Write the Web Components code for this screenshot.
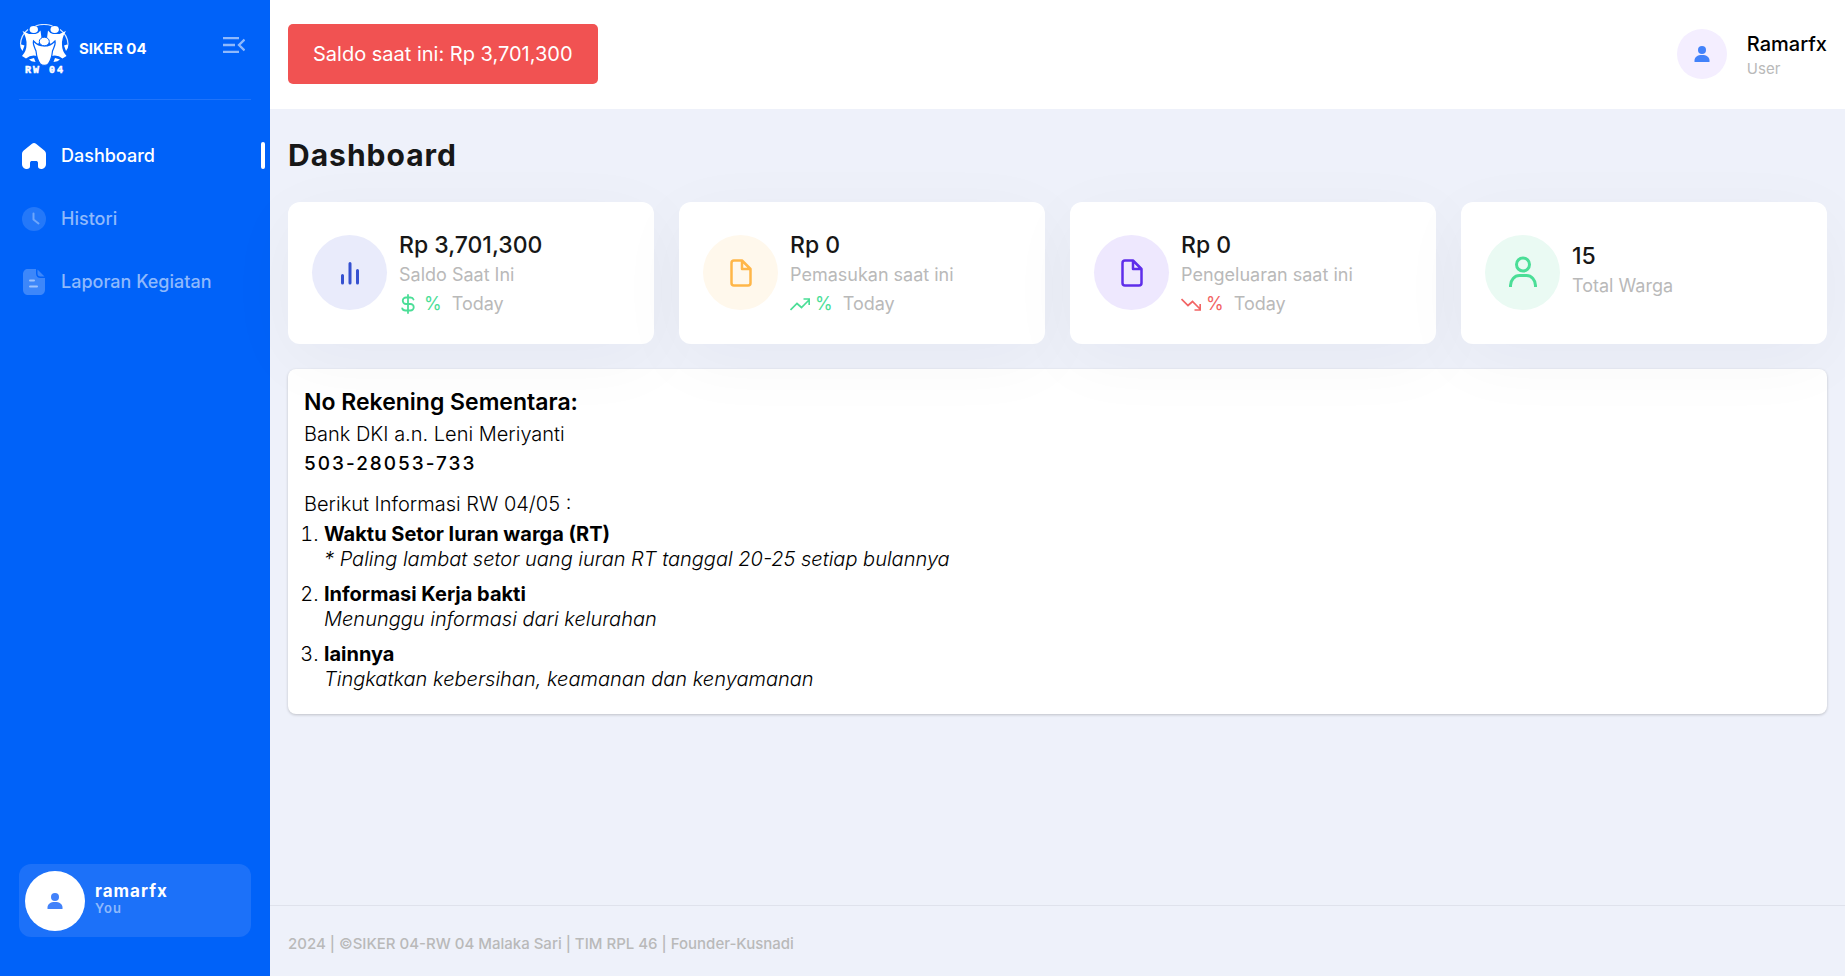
<!DOCTYPE html>
<html lang="id">
<head>
<meta charset="utf-8">
<title>SIKER 04 - Dashboard</title>
<style>
body { margin: 0; font-family: Inter, "Open Sans", sans-serif; background: #eef1fa; color: #111; }
</style>
</head>
<body>
<app-shell>
  <side-bar slot="side" user="ramarfx">
    <nav-item active label="Dashboard" icon="home"></nav-item>
    <nav-item label="Histori" icon="clock"></nav-item>
    <nav-item label="Laporan Kegiatan" icon="doc"></nav-item>
  </side-bar>
  <top-bar slot="top" name="Ramarfx" role-name="User">Saldo saat ini: Rp 3,701,300</top-bar>
  <card-grid>
    <stat-card icon="bars" trend="dollar" value="Rp 3,701,300" style="--tint:#e9ebfb;--ink:#3551d0;--trend:#4bde97">Saldo Saat Ini</stat-card>
    <stat-card icon="file" trend="up" value="Rp 0" style="--tint:#fff8ec;--ink:#ffb648;--trend:#4bde97">Pemasukan saat ini</stat-card>
    <stat-card icon="file" trend="down" value="Rp 0" style="--tint:#eee8fe;--ink:#5f2eea;--trend:#f26464">Pengeluaran saat ini</stat-card>
    <stat-card icon="person" value="15" style="--tint:#eafaf3;--ink:#4bde97">Total Warga</stat-card>
  </card-grid>
  <info-panel></info-panel>
  <page-footer slot="foot">2024 | ©SIKER 04-RW 04 Malaka Sari | TIM RPL 46 | Founder-Kusnadi</page-footer>
</app-shell>
<script>
const define = (name, render) => customElements.define(name, class extends HTMLElement {
  connectedCallback() {
    if (this.shadowRoot) return;
    this.attachShadow({ mode: 'open' }).innerHTML = render(this);
  }
});

const icons = {
  home: '<svg width="24" height="26" viewBox="0 0 24 26"><path fill="#fff" d="M10 .8c1.200-1 2.800-1 4 0l8.300 6.700c1 .8 1.700 2 1.700 3.400V21c0 2.800-2 5-4.800 5-2 0-3.200-1-3.200-2.800V20c0-1.400-1-2-2-2h-4c-1 0-2 .6-2 2v3.200C8 25 6.800 26 4.800 26 2 26 0 23.800 0 21V10.900c0-1.400.7-2.600 1.700-3.400z"/></svg>',
  clock: '<svg width="24" height="24" viewBox="0 0 24 24"><circle cx="12" cy="12" r="12" fill="#fff" fill-opacity=".14"/><path d="M11.500 6.500v6l5 4" fill="none" stroke="#fff" stroke-opacity=".34" stroke-width="2" stroke-linecap="round" stroke-linejoin="round"/></svg>',
  doc: '<svg width="24" height="26" viewBox="0 0 24 26"><path fill="#fff" fill-opacity=".24" d="M6 0h8v4.500C14 7.500 16 9 18.500 9H23v11.500c0 3.500-2 5.500-5.500 5.500H6.500C3 26 1 24 1 20.500v-15C1 2 3 0 6 0z"/><path fill="#fff" fill-opacity=".24" d="M15.500.5 22.500 7.500h-4c-2 0-3-1-3-3z"/><path d="M8 11.500h4M8 17.500h7" stroke="#fff" stroke-opacity=".5" stroke-width="2" stroke-linecap="round"/></svg>',
  bars: '<svg width="75" height="75" viewBox="0 0 75 75"><path d="M30.500 40.500v7.500M38 28.500V48M45.500 35.500V48" stroke="currentColor" stroke-width="3" stroke-linecap="round"/></svg>',
  file: '<svg width="75" height="75" viewBox="0 0 75 75"><path d="M39 25.500H31a2.500 2.500 0 0 0-2.500 2.500v20a2.500 2.500 0 0 0 2.500 2.500h14a2.500 2.500 0 0 0 2.500-2.500V34zV34h8.500" fill="none" stroke="currentColor" stroke-width="2.500" stroke-linejoin="round"/></svg>',
  person: '<svg width="75" height="75" viewBox="0 0 75 75"><circle cx="38" cy="29.500" r="6.500" fill="none" stroke="currentColor" stroke-width="3"/><path d="M25.500 52v-1.500c0-5.500 4-10 9-10h7c5 0 9 4.500 9 10V52" fill="none" stroke="currentColor" stroke-width="3"/></svg>',
  dollar: '<svg width="20" height="20" viewBox="0 0 20 20"><path d="M9 1v18M14.500 5.500c-.5-1.500-1.500-2-3-2H7a3 3 0 0 0 0 6.500h4.500a3 3 0 0 1 0 6.500H6.500c-1.800 0-3-.8-3.300-2.200" fill="none" stroke="currentColor" stroke-width="1.800" stroke-linecap="round"/></svg>',
  up: '<svg width="20" height="20" viewBox="0 0 20 20"><path d="M.5 16 7 9.500l4.500 4L19 6M13.500 5H19.200v6" fill="none" stroke="currentColor" stroke-width="1.700"/></svg>',
  down: '<svg width="20" height="20" viewBox="0 0 20 20"><path d="M.5 5 7 11.500l4.500-4L19 15M13.500 16H19.200v-6" fill="none" stroke="currentColor" stroke-width="1.700"/></svg>',
  user: '<svg width="16" height="16" viewBox="0 0 16 16"><circle cx="8" cy="4" r="4" fill="#4282fa"/><path fill="#4282fa" d="M.5 16v-1.500c0-3.500 3-5.500 7.500-5.500s7.500 2 7.500 5.500V16z"/></svg>',
  logo: `<svg class="logo" width="50" height="54" viewBox="0 0 50 54" role="img" aria-label="RW 04">
    <path d="M16.500 2q8.500-3 17 0M9 5.500Q2 11 1.500 20M41 5.500q7.500 5.500 8 14.500" fill="none" stroke="#fff" stroke-opacity=".85" stroke-width="1.200"/>
    <path fill="#fff" d="M1 20l4.500 1.500L3.500 27Q1 24 1 20zM49.500 20 45 21.500l2 5.500q2.500-3 2.500-7zM10 35.500l5-1.500 1.500 4Q12 37.500 10 35.500zM41 35.500 36 34l-1.500 4q4.500-.5 6.500-2.500z"/>
    <ellipse cx="14.800" cy="5.500" rx="4.200" ry="3.400" fill="#fff"/><ellipse cx="35.700" cy="5.500" rx="4.200" ry="3.400" fill="#fff"/>
    <path fill="#fff" d="M3.500 7 10 10h6.500Q19.500 9.500 21.500 6.500l1 7.500-4 7v11Q12 30 7 34.500l-4-2.500Q7.500 27 7.500 21 8 14 3.500 7zM47 7 40.500 10H34Q31 9.500 29 6.500L28 14l4 7v11q6.500-2 11.500 2.500l4-2.500Q43 27 43 21q-.5-7 4-14z"/>
    <path fill="#fff" stroke="#0062f9" stroke-width="1.200" d="M14.500 17Q19 22 25.300 22T36 17c1 4-1.500 7-2.500 10-.5 5-1.500 9-4 12.500-2 2.500-6.500 2.500-8.500 0-2.500-3.500-3.500-7.500-4-12.500-1-3-3.500-6-2.500-10z"/>
    <ellipse cx="25.300" cy="17.500" rx="5" ry="4.300" fill="#fff" stroke="#0062f9" stroke-width="1"/>
    <text x="6" y="49" fill="#fff" stroke="#fff" stroke-width=".5" font-family="Liberation Mono, monospace" font-weight="700" font-size="10" letter-spacing="2">RW 04</text></svg>`
};

define('app-shell', () => `<style>
  :host { display: grid; grid-template-columns: 270px minmax(0, 1fr); min-height: 100vh; }
  .col { display: flex; flex-direction: column; }
  main { flex: 1; padding: 24px 18px 0; }
  h1 { margin: 0 0 24px; font-size: 30px; line-height: 45px; font-weight: 700; letter-spacing: 1px; color: #171717; }
</style><slot name="side"></slot><div class="col"><slot name="top"></slot><main><h1>Dashboard</h1><slot></slot></main><slot name="foot"></slot></div>`);

define('side-bar', el => `<style>
  :host { display: flex; flex-direction: column; background: #0062f9; color: #fff; }
  .brand { display: flex; align-items: center; height: 50px; margin: 0 19px; padding: 24px 0 25px; border-bottom: 1px solid #1f73fa; }
  .brand a { display: flex; align-items: center; gap: 10px; color: #fff; text-decoration: none; font-size: 15px; font-weight: 700; }
  svg { display: block; }
  .logo { margin-bottom: -4px; }
  .brand span { padding-bottom: 2px; }
  button { border: 0; background: none; padding: 0; margin: 0 6px 8px auto; }
  nav { display: flex; flex-direction: column; margin-top: 24px; }
  .me { display: flex; align-items: center; gap: 10px; margin: auto 19px 39px; padding: 7px 6px 6px; border-radius: 12px; background: #1c71f9; }
  .pic { width: 60px; height: 60px; border-radius: 50%; background: #fff; display: grid; place-items: center; }
  .id { padding-bottom: 5px; }
  b { display: block; font-size: 17px; line-height: 20px; font-weight: 700; letter-spacing: 1px; }
  small { display: block; font-size: 13px; line-height: 15px; font-weight: 600; letter-spacing: 1px; color: #8fb9fc; }
</style><div class="brand"><a href="#">${icons.logo}<span>SIKER 04</span></a>
<button aria-label="Menu"><svg width="22" height="16" viewBox="0 0 22 16"><path d="M0 1.200h16M0 8h12M0 14.800h16" stroke="#8fb9fc" stroke-width="2.300"/><path d="M21.500 2.500 16 8l5.500 5.500" fill="none" stroke="#8fb9fc" stroke-width="2.300"/></svg></button></div>
<nav><slot></slot></nav>
<div class="me"><span class="pic">${icons.user}</span><span class="id"><b>${el.getAttribute('user')}</b><small>You</small></span></div>`);

define('nav-item', el => `<style>
  :host { display: block; }
  a { display: flex; align-items: center; gap: 15px; height: 63px; padding: 0 5px 0 22px; color: #8fb9fc; text-decoration: none; font-size: 18px; font-weight: 500; }
  :host([active]) a { color: #fff; }
  i { margin-left: auto; width: 4px; height: 27px; border-radius: 2px; background: #fff; }
</style><a href="#">${icons[el.getAttribute('icon')]}<span>${el.getAttribute('label')}</span>${el.hasAttribute('active') ? '<i></i>' : ''}</a>`);

define('top-bar', el => `<style>
  :host { display: flex; align-items: flex-start; justify-content: space-between; padding: 24px 18px 25px; background: #fff; }
  button { height: 60px; padding: 0 25px; border: 0; border-radius: 5px; background: #f15252; color: #fff; font: 400 20px/30px Inter, sans-serif; }
  .who { display: flex; align-items: center; gap: 20px; height: 60px; }
  .pic { width: 50px; height: 50px; border-radius: 50%; background: #f4eeff; display: grid; place-items: center; }
  .id { padding-top: 1px; }
  b { display: block; font-size: 20px; line-height: 28px; font-weight: 500; color: #000; }
  small { display: block; font-size: 15px; line-height: 22px; color: #b9b9b9; }
</style><button><slot></slot></button><div class="who"><span class="pic">${icons.user}</span><span class="id"><b>${el.getAttribute('name')}</b><small>${el.getAttribute('role-name')}</small></span></div>`);

define('card-grid', () => `<style>
  :host { display: grid; grid-template-columns: repeat(4, minmax(0, 1fr)); gap: 25px; margin-bottom: 25px; }
</style><slot></slot>`);

define('stat-card', el => {
  const t = el.getAttribute('trend');
  return `<style>
  :host { position: relative; display: flex; align-items: center; gap: 12px; height: 142px; box-sizing: border-box; padding: 0 24px 2px; border-radius: 12px; background: #fff; box-shadow: 0 16px 72px rgba(17, 17, 40, .04); }
  .ic { flex: none; width: 75px; height: 75px; border-radius: 50%; background: var(--tint); color: var(--ink); }
  svg { display: block; }
  div.x { padding-bottom: 3px; }
  :host([trend]) div.x { padding: 5px 0 0; }
  b { display: block; font-size: 23px; line-height: 29px; font-weight: 500; color: #171717; }
  .l { display: block; font-size: 18px; line-height: 29px; color: #b9b9b9; }
  .t { display: flex; align-items: center; font-size: 18px; line-height: 29px; color: var(--trend); }
  .t span { margin-left: 5px; }
  .t em { margin-left: 10px; font-style: normal; color: #b9b9b9; }
</style><span class="ic">${icons[el.getAttribute('icon')]}</span><div class="x"><b>${el.getAttribute('value')}</b><span class="l"><slot></slot></span>${t ? `<div class="t">${icons[t]}<span>%</span><em>Today</em></div>` : ''}</div>`;
});

define('info-panel', () => `<style>
  :host { display: block; padding: 17px 16px 22px; border-radius: 8px; background: #fff; box-shadow: 0 1px 3px rgba(0, 0, 0, .2); color: #000; font-size: 20px; font-weight: 300; }
  h2 { margin: 0; font-size: 23px; line-height: 33px; font-weight: 600; }
  p { margin: 0; line-height: 30px; }
  .n { font-size: 19px; font-weight: 500; letter-spacing: 2px; margin-bottom: 10px; }
  ol { margin: 3px 0 0; padding-left: 20px; line-height: 25px; }
  li { margin-bottom: 10px; }
  li:last-child { margin-bottom: 0; }
  strong { font-weight: 700; }
</style><h2>No Rekening Sementara:</h2><p>Bank DKI a.n. Leni Meriyanti</p><p class="n">503-28053-733</p><p>Berikut Informasi RW 04/05 :</p>
<ol><li><strong>Waktu Setor Iuran warga (RT)</strong><br><em>* Paling lambat setor uang iuran RT tanggal 20-25 setiap bulannya</em></li>
<li><strong>Informasi Kerja bakti</strong><br><em>Menunggu informasi dari kelurahan</em></li>
<li><strong>lainnya</strong><br><em>Tingkatkan kebersihan, keamanan dan kenyamanan</em></li></ol>`);

define('page-footer', () => `<style>
  :host { display: block; padding: 27px 18px 21px; border-top: 1px solid #dfe2ec; font-size: 15px; line-height: 22px; font-weight: 500; color: #b9b9b9; }
</style><slot></slot>`);
</script>
</body>
</html>
